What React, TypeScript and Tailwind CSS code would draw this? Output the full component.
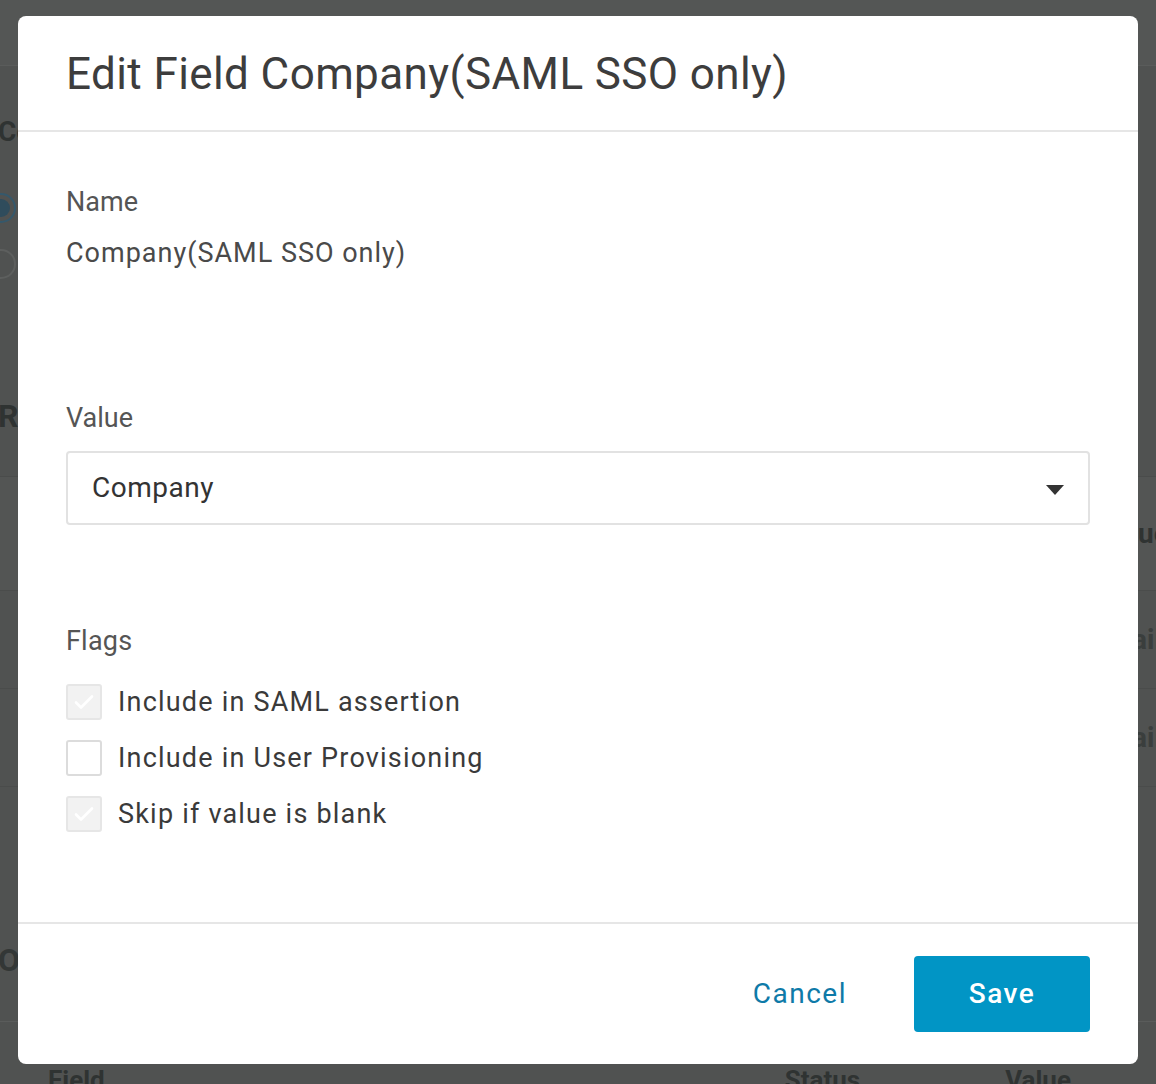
import React from "react";

function Check({ checked, disabled }: { checked?: boolean; disabled?: boolean }) {
  return (
    <div
      className={
        "w-[36px] h-[36px] rounded-[3px] border-2 flex items-center justify-center shrink-0 " +
        (disabled ? "bg-[#f2f2f2] border-[#e6e6e6]" : "bg-white border-[#dcdcdc]")
      }
    >
      {checked && (
        <svg width="24" height="24" viewBox="0 0 24 24" fill="none">
          <path d="M4 12.5l5 5L20 6.5" stroke="#ffffff" strokeWidth="2.6" strokeLinecap="round" strokeLinejoin="round" />
        </svg>
      )}
    </div>
  );
}

export default function App() {
  const font = { fontFamily: "Roboto, 'Noto Sans', sans-serif" };
  return (
    <div className="relative w-[1156px] h-[1084px] overflow-hidden bg-[#505251]" style={font}>
      {/* dimmed page behind */}
      <div className="flex flex-col w-[1156px] text-[#2f3332]">
        <div className="h-[66px] bg-[#545655] border-b border-[#5a5c5b]" />
        <div className="h-[46px]" />
        <div className="text-[28px] font-bold leading-[40px] -ml-[2px]">Company</div>
        <div className="mt-[41px] flex flex-col gap-[26px] -ml-[14px]">
          <div className="w-[30px] h-[30px] rounded-full border-2 border-[#35586b] flex items-center justify-center">
            <div className="w-[18px] h-[18px] rounded-full bg-[#2f4c5c]" />
          </div>
          <div className="w-[30px] h-[30px] rounded-full border-2 border-[#5d5f5e]" />
        </div>
        <div className="mt-[117px] text-[32px] font-bold leading-[40px] -ml-[2px]">Rules</div>
        <div className="mt-[40px] border-t border-[#4a4c4b] h-[114px] bg-[#535554] flex items-center">
          <span className="ml-[1098px] text-[28px] font-bold">Value</span>
        </div>
        <div className="border-t border-[#4a4c4b] h-[98px] flex items-center">
          <span className="ml-[1092px] text-[28px] font-bold text-[#3a3e3d]">Email</span>
        </div>
        <div className="border-t border-[#4a4c4b] h-[98px] flex items-center">
          <span className="ml-[1092px] text-[28px] font-bold text-[#3a3e3d]">Email</span>
        </div>
        <div className="border-t border-[#4a4c4b] h-[154px]" />
        <div className="text-[32px] font-bold leading-[40px] -ml-[2px] text-[#333736]">Other</div>
        <div className="mt-[41px] border-t border-[#5a5c5b] h-[80px] flex items-start pt-[43px] text-[26px] font-bold leading-[30px]">
          <span className="ml-[48px]">Field</span>
          <span className="ml-[680px]">Status</span>
          <span className="ml-[145px]">Value</span>
        </div>
      </div>

      {/* modal */}
      <div className="absolute left-[18px] top-[16px] w-[1120px] h-[1048px] bg-white rounded-[8px] flex flex-col">
        <div className="h-[116px] px-[48px] flex items-center border-b-2 border-[#e6e6e6] shrink-0">
          <h1 className="text-[44px] leading-[50px] text-[#3d3d3d] font-normal tracking-[0.4px] mt-[2px]">Edit Field Company(SAML SSO only)</h1>
        </div>
        <div className="flex-1 px-[48px] pt-[54px] flex flex-col">
          <div className="text-[27px] leading-[32px] text-[#555555]">Name</div>
          <div className="mt-[19px] text-[27px] leading-[32px] text-[#4a4a4a] tracking-[1px]">Company(SAML SSO only)</div>
          <div className="mt-[133px] text-[27px] leading-[32px] text-[#555555]">Value</div>
          <div className="mt-[17px] h-[74px] border-2 border-[#e2e2e2] rounded-[4px] flex items-center justify-between pl-[24px] pr-[24px]">
            <span className="text-[28px] text-[#333333] tracking-[0.5px]">Company</span>
            <svg width="18" height="10" viewBox="0 0 18 10" className="mt-[3px]">
              <path d="M0 0h18L9 10z" fill="#333333" />
            </svg>
          </div>
          <div className="mt-[100px] text-[27px] leading-[32px] text-[#555555] tracking-[0.2px]">Flags</div>
          <div className="mt-[27px] flex flex-col gap-[20px]">
            <div className="flex items-center gap-[16px] h-[36px]">
              <Check checked disabled />
              <span className="text-[27px] leading-[36px] text-[#3a3a3a] tracking-[1.2px]">Include in SAML assertion</span>
            </div>
            <div className="flex items-center gap-[16px] h-[36px]">
              <Check />
              <span className="text-[27px] leading-[36px] text-[#3a3a3a] tracking-[1.2px]">Include in User Provisioning</span>
            </div>
            <div className="flex items-center gap-[16px] h-[36px]">
              <Check checked disabled />
              <span className="text-[27px] leading-[36px] text-[#3a3a3a] tracking-[1.2px]">Skip if value is blank</span>
            </div>
          </div>
        </div>
        <div className="h-[142px] border-t-2 border-[#e6e6e6] shrink-0 flex items-center justify-end pr-[48px]">
          <button className="text-[28px] text-[#0e7aa8] tracking-[1.5px] mr-[67px]">Cancel</button>
          <button className="w-[176px] h-[76px] rounded-[4px] bg-[#0195c5] text-white text-[28px] tracking-[1.5px] font-medium">Save</button>
        </div>
      </div>
    </div>
  );
}
